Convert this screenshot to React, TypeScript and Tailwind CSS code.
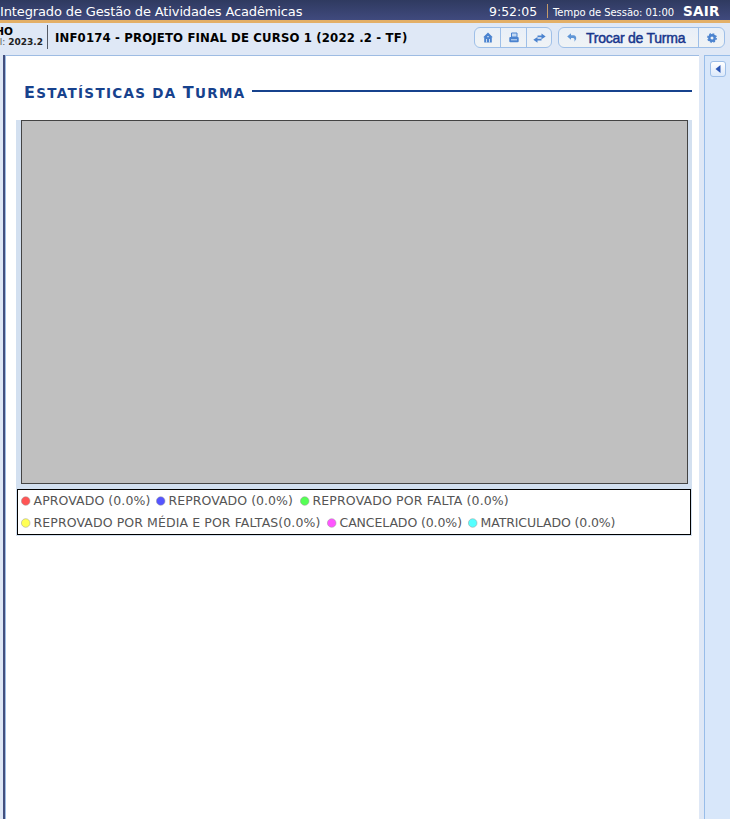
import React from "react";

const House = () => (
  <svg width="10" height="11" viewBox="0 0 10 11">
    <path d="M5 .5 9.8 5.2H8.8v5.3h-7.6V5.2H.2z" fill="#4b83cf" />
    <path d="M3 10.5V7h.9v3.5zM6.1 10.5V7H7v3.5zM4.3 4h1.4v1.2H4.3z" fill="#d5e4f6" />
  </svg>
);
const Printer = () => (
  <svg width="10" height="11" viewBox="0 0 10 11">
    <path d="M2.5 1h5.5v4h-5.5z" fill="#c4d9f2" stroke="#4b83cf" />
    <rect x=".3" y="5" width="9.4" height="5.2" rx="1" fill="#4b83cf" />
    <path d="M2 7.8h6" stroke="#cfe0f5" />
  </svg>
);
const Swap = () => (
  <svg width="13" height="10" viewBox="0 0 13 10">
    <path d="M4.5 2.4h4V.4l4.2 3-4.2 2.9V4.2h-4zM8.5 5.8h-4V3.9L.3 6.8l4.2 2.9V7.6h4z" fill="#4b83cf" />
  </svg>
);
const Back = () => (
  <svg width="10" height="9" viewBox="0 0 10 9">
    <path d="M.2 3.4 4 .2v2h2.5C8.6 2.2 9.6 4 9.1 6.2L7.4 8.8C7.8 6.2 7.5 5 6 5H4v1.8z" fill="#5f95d6" />
  </svg>
);
const Gear = () => (
  <svg width="10" height="10" viewBox="0 0 10 10">
    <circle cx="5" cy="5" r="4.2" fill="none" stroke="#4b83cf" strokeWidth="1.4" strokeDasharray="1.8 1.5" />
    <circle cx="5" cy="5" r="2.7" fill="none" stroke="#4b83cf" strokeWidth="2.4" />
  </svg>
);

function Item({ color, label, className = "" }: { color: string; label: string; className?: string }) {
  return (
    <span className={"flex h-[22px] items-center gap-[3px] " + className}>
      <svg width="10" height="10" viewBox="0 0 10 10" className="mt-px shrink-0">
        <circle cx="4.7" cy="5" r="4.3" fill={color} stroke="#999" strokeWidth=".5" />
      </svg>
      <span className="-ml-[0.5px] pt-px">{label}</span>
    </span>
  );
}

export default function App() {
  return (
    <div className="flex h-[819px] w-[730px] flex-col overflow-hidden whitespace-nowrap bg-[#dfe8f6] font-['DejaVu_Sans',sans-serif]">
      <header className="flex h-[23px] shrink-0 border-b-[3px] border-[#e3af67] bg-linear-to-b from-[#2f3a60] to-[#404a7e] text-white">
        <span className="w-[489px] pt-[2px] text-[13px] leading-5 tracking-[-0.13px]">Integrado de Gestão de Atividades Acadêmicas</span>
        <span className="w-[58px] pt-[2px] text-[12.5px] leading-5">9:52:05</span>
        <span className="mt-1 h-[14px] w-px bg-[#c39a6a]" />
        <span className="w-[135px] pl-[5px] pt-[3px] text-[10px] leading-5 tracking-[-0.05px]">Tempo de Sessão: 01:00</span>
        <span className="pt-px text-[13.5px] font-bold leading-5 tracking-[0.3px]">SAIR</span>
      </header>

      <div className="flex h-8 shrink-0">
        <div className="mt-[2px] h-6 w-12 border-r border-[#555b66] pt-px text-[9px] leading-[11px]">
          <div className="-ml-[4px] flex h-[11px] w-[17px] items-center justify-end text-[10.5px] font-bold">HO</div>
          <div className="-ml-[4px] flex h-[11px] w-[47px] justify-end text-[9px] text-[#555]">
            <span>el:&nbsp;</span><b className="text-[#222]">2023.2</b>
          </div>
        </div>
        <h1 className="w-[426px] pl-[7px] pt-[5px] font-['DejaVu_Sans_Condensed','DejaVu_Sans',sans-serif] text-[13px] font-bold leading-5 tracking-[0.16px] text-black">INF0174 - PROJETO FINAL DE CURSO 1 (2022 .2 - TF)</h1>
        <div className="mt-1 flex h-[21px] w-[78px] divide-x divide-[#9ebfe8] rounded-md border border-[#9ebfe8] bg-linear-to-b from-[#e8eff8] to-[#f0f3f5]">
          <span className="flex w-[26px] items-center justify-center"><House /></span>
          <span className="flex w-[26px] items-center justify-center"><Printer /></span>
          <span className="flex w-[24px] items-center justify-center"><Swap /></span>
        </div>
        <div className="ml-[6px] mt-1 flex h-[21px] w-[167px] rounded-md border border-[#9ebfe8] bg-linear-to-b from-[#e8eff8] to-[#f0f3f5]">
          <span className="flex w-[140px] items-center border-r border-[#9ebfe8] pl-[8px]">
            <Back />
            <span className="ml-[9px] font-['Liberation_Sans',Arial,sans-serif] text-[14px] leading-5 tracking-[-0.25px] text-[#17358c] [-webkit-text-stroke:0.45px_#17358c]">Trocar de Turma</span>
          </span>
          <span className="flex grow items-center justify-center"><Gear /></span>
        </div>
      </div>

      <div className="flex min-h-0 grow">
        <div className="w-[3px]" />
        <main className="w-[696px] border-l-2 border-[#434f7e] bg-white">
          <div className="h-full border-l border-t border-[#9ebce3]">
            <div className="flex h-[64px] items-start pl-[18px] pt-[26px]">
              <h2 className="w-[228px] text-[13.5px] font-bold uppercase leading-[21px] tracking-[1.32px] text-[#17428d]">
                <span className="text-[16px]">E</span>statísticas da <span className="text-[16px]">T</span>urma
              </h2>
              <div className="mt-[8px] h-[2px] w-[440px] bg-[#17428d]" />
            </div>
            <section className="ml-[10px] h-[416px] w-[676px] bg-[#d3e0f0] px-px">
              <div className="ml-[4px] h-[364px] w-[667px] border border-[#444] bg-[#c0c0c0]" />
              <div className="mt-[5px] h-[46px] w-[674px] border border-black bg-white pl-[3px] text-[12.5px] leading-[22px] text-[#555]">
                <div className="-mt-px flex">
                  <Item color="#ff5555" label="APROVADO (0.0%)" className="w-[135px] tracking-[0.08px]" />
                  <Item color="#5555ff" label="REPROVADO (0.0%)" className="w-[144px] tracking-[0.05px]" />
                  <Item color="#55ff55" label="REPROVADO POR FALTA (0.0%)" className="tracking-[0.14px]" />
                </div>
                <div className="flex">
                  <Item color="#ffff55" label="REPROVADO POR MÉDIA E POR FALTAS(0.0%)" className="w-[306px] tracking-[0.1px]" />
                  <Item color="#ff55ff" label="CANCELADO (0.0%)" className="w-[141px] tracking-[-0.1px]" />
                  <Item color="#55ffff" label="MATRICULADO (0.0%)" className="tracking-[-0.12px]" />
                </div>
              </div>
            </section>
          </div>
        </main>
        <aside className="ml-[5px] w-[26px] border-l border-t border-[#98bde9] bg-[#d8e7fa] pl-[5px] pt-[5px]">
          <div className="flex size-4 items-center justify-center rounded-[3px] border border-[#9ebfe8] bg-linear-to-b from-white to-[#dce9fa]">
            <svg width="6" height="8" viewBox="0 0 6 8"><path d="M5.5 0v8L.5 4z" fill="#2b56b5" /></svg>
          </div>
        </aside>
      </div>
    </div>
  );
}
